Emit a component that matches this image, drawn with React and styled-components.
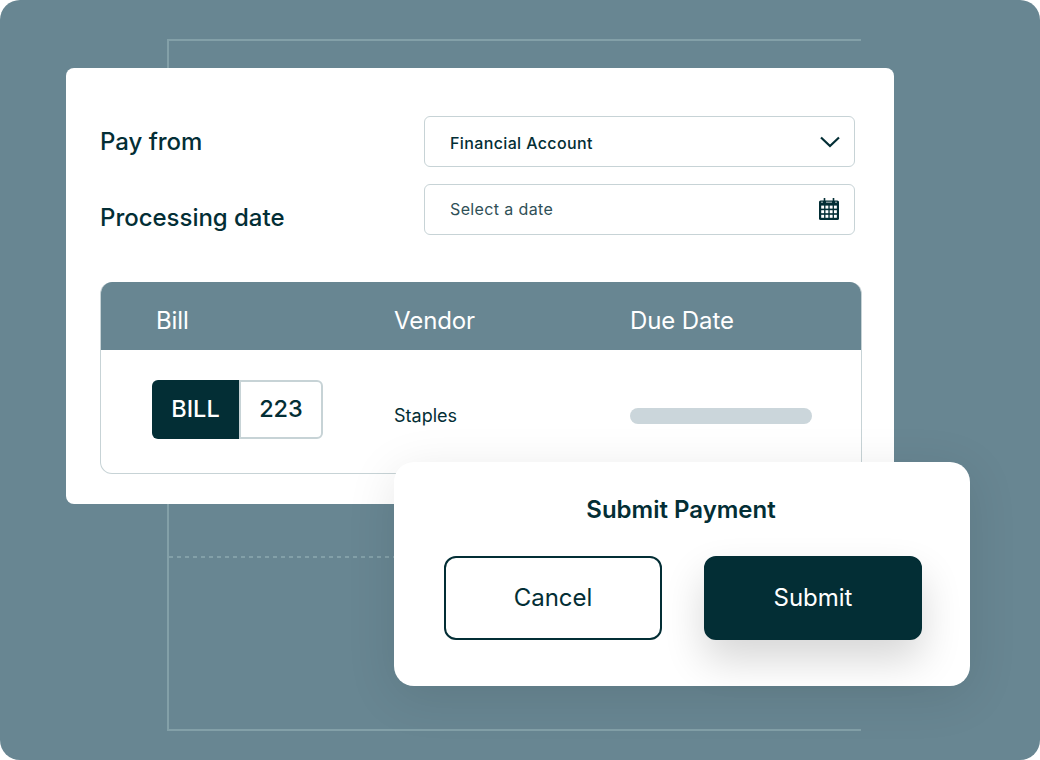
import React from "react";
import styled, { createGlobalStyle } from "styled-components";

const DARK = "#032e35";
const TEAL = "#688692";
const LINE = "#c7d3d6";

const GlobalStyle = createGlobalStyle`
  html, body {
    margin: 0;
    padding: 0;
    background: #fff;
  }
  body {
    font-family: Inter, "Liberation Sans", sans-serif;
    color: ${DARK};
  }
`;

function ChevronIcon() {
  return (
    <svg width="20" height="12" viewBox="0 0 20 12" fill="none">
      <path d="M1 1.5L10 10L19 1.5" stroke={DARK} strokeWidth="2.2" />
    </svg>
  );
}

function CalendarIcon() {
  const cells = [];
  for (let row = 0; row < 3; row++) {
    for (let col = 0; col < 4; col++) {
      cells.push(<rect key={`${row}-${col}`} x={2.2 + col * 4.25} y={7.6 + row * 4.6} width="2.9" height="3" fill="#fff" />);
    }
  }
  return (
    <svg width="20" height="22" viewBox="0 0 20 22" fill="none">
      <rect x="0" y="2.5" width="20" height="19.5" rx="1.6" fill={DARK} />
      <path d="M5.5 0V5M14.5 0V5" stroke={DARK} strokeWidth="1.6" />
      <path d="M2 4.2H4M7 4.2H13M16 4.2H18" stroke="#fff" strokeWidth="0.7" />
      {cells}
    </svg>
  );
}

export default function App() {
  return (
    <>
      <GlobalStyle />
      <Stage>
        <Frame />
        <DashedLine />
        <Card>
          <FormRow>
            <LabelColumn>
              <Label>Pay from</Label>
              <Label>Processing date</Label>
            </LabelColumn>
            <FieldColumn>
              <Field>
                <FieldText $strong>Financial Account</FieldText>
                <ChevronIcon />
              </Field>
              <Field>
                <FieldText>Select a date</FieldText>
                <IconSlot>
                  <CalendarIcon />
                </IconSlot>
              </Field>
            </FieldColumn>
          </FormRow>
          <Table>
            <TableHead>
              <BillColumn>Bill</BillColumn>
              <VendorColumn>Vendor</VendorColumn>
              <div>Due Date</div>
            </TableHead>
            <TableBody>
              <ChipColumn>
                <Chip>
                  <ChipLabel>BILL</ChipLabel>
                  <ChipNumber>223</ChipNumber>
                </Chip>
              </ChipColumn>
              <VendorName>Staples</VendorName>
              <Placeholder />
            </TableBody>
          </Table>
        </Card>
        <Dialog>
          <DialogTitle>Submit Payment</DialogTitle>
          <DialogActions>
            <CancelButton>Cancel</CancelButton>
            <SubmitButton>Submit</SubmitButton>
          </DialogActions>
        </Dialog>
      </Stage>
    </>
  );
}

const Stage = styled.div`
  position: relative;
  box-sizing: border-box;
  width: 1040px;
  height: 760px;
  padding: 68px 0 0 66px;
  background: ${TEAL};
  border-radius: 20px;
  overflow: hidden;
`;
const Frame = styled.div`
  position: absolute;
  left: 167px;
  top: 39px;
  width: 694px;
  height: 692px;
  box-sizing: border-box;
  border: 2px solid #83a0a8;
  border-right: 0;
`;
const DashedLine = styled.div`
  position: absolute;
  left: 169px;
  top: 556px;
  width: 226px;
  height: 2px;
  background: repeating-linear-gradient(to right, #83a0a8 0 4px, transparent 4px 8px);
`;
const Card = styled.div`
  position: relative;
  box-sizing: border-box;
  width: 828px;
  height: 436px;
  padding: 48px 32px 0 34px;
  background: #fff;
  border-radius: 8px;
`;
const FormRow = styled.div`
  display: flex;
  justify-content: space-between;
  padding-right: 7px;
`;
const LabelColumn = styled.div`
  display: flex;
  flex-direction: column;
  gap: 46px;
  padding-top: 11px;
`;
const Label = styled.div`
  font-size: 24px;
  line-height: 30px;
  font-weight: 500;
  letter-spacing: -0.02px;
  color: ${DARK};
`;
const FieldColumn = styled.div`
  display: flex;
  flex-direction: column;
  gap: 17px;
  width: 431px;
`;
const Field = styled.div`
  box-sizing: border-box;
  display: flex;
  align-items: center;
  justify-content: space-between;
  height: 51px;
  padding: 0 14px 0 25px;
  border: 1px solid ${LINE};
  border-radius: 6px;
  background: #fff;
`;
const FieldText = styled.span`
  font-size: 16px;
  letter-spacing: 0.37px;
  font-weight: ${(p) => (p.$strong ? 500 : 400)};
  padding: ${(p) => (p.$strong ? "2px 0 0" : "0 0 2px")};
  color: ${(p) => (p.$strong ? DARK : "#2f5057")};
`;
const IconSlot = styled.span`
  display: flex;
  margin: 0 1px 2px 0;
`;
const Table = styled.div`
  box-sizing: border-box;
  width: 762px;
  height: 192px;
  margin-top: 47px;
  border: 1px solid ${LINE};
  border-top: 0;
  border-radius: 12px;
  overflow: hidden;
`;
const TableHead = styled.div`
  box-sizing: border-box;
  display: flex;
  align-items: center;
  height: 68px;
  margin: 0 -1px;
  padding-top: 8px;
  background: ${TEAL};
  color: #fff;
  font-size: 24px;
  letter-spacing: -0.1px;
`;
const BillColumn = styled.div`
  box-sizing: border-box;
  width: 294px;
  padding-left: 56px;
`;
const VendorColumn = styled.div`
  width: 236px;
`;
const TableBody = styled.div`
  box-sizing: border-box;
  display: flex;
  align-items: flex-start;
  height: 123px;
  margin-left: -1px;
  padding-top: 30px;
`;
const ChipColumn = styled.div`
  box-sizing: border-box;
  width: 294px;
  padding-left: 52px;
`;
const Chip = styled.div`
  display: flex;
  width: 171px;
  height: 59px;
  font-size: 23.5px;
  font-weight: 550;
`;
const ChipLabel = styled.div`
  display: flex;
  align-items: center;
  justify-content: center;
  width: 87px;
  padding-bottom: 2px;
  background: ${DARK};
  color: #fff;
  border-radius: 6px 0 0 6px;
`;
const ChipNumber = styled.div`
  box-sizing: border-box;
  display: flex;
  align-items: center;
  justify-content: center;
  flex: 1;
  padding-bottom: 2px;
  border: 2px solid ${LINE};
  border-radius: 0 6px 6px 0;
  color: ${DARK};
`;
const VendorName = styled.div`
  width: 236px;
  margin-top: 25px;
  font-size: 18px;
  line-height: 22px;
  color: ${DARK};
`;
const Placeholder = styled.div`
  width: 182px;
  height: 16px;
  margin-top: 28px;
  border-radius: 8px;
  background: #cbd6db;
`;
const Dialog = styled.div`
  position: absolute;
  left: 394px;
  top: 462px;
  box-sizing: border-box;
  width: 576px;
  height: 224px;
  padding: 31px 48px 0 50px;
  background: #fff;
  border-radius: 20px;
  box-shadow: 0 10px 50px rgba(0, 0, 0, 0.1);
`;
const DialogTitle = styled.div`
  padding-right: 4px;
  font-size: 24px;
  line-height: 34px;
  font-weight: 600;
  text-align: center;
  color: ${DARK};
`;
const DialogActions = styled.div`
  display: flex;
  justify-content: space-between;
  margin-top: 29px;
`;
const CancelButton = styled.div`
  box-sizing: border-box;
  display: flex;
  align-items: center;
  justify-content: center;
  width: 218px;
  height: 84px;
  padding-bottom: 2px;
  border: 2px solid ${DARK};
  border-radius: 12px;
  background: #fff;
  color: ${DARK};
  font-size: 24px;
`;
const SubmitButton = styled(CancelButton)`
  background: ${DARK};
  color: #fff;
  box-shadow: 0 20px 40px rgba(0, 0, 0, 0.16);
`;
